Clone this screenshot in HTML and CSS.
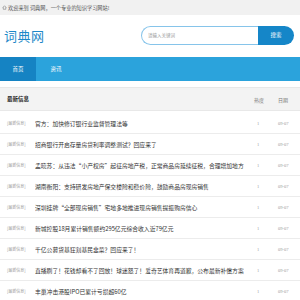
FILE: index.html
```html
<!DOCTYPE html>
<html lang="zh-CN">
<head>
  <meta charset="UTF-8">
  <meta name="viewport" content="width=device-width, initial-scale=1.0">
  <title>词典网</title>
  <link rel="stylesheet" href="styles.css">
</head>
<body>

<div class="top-bar">
  <svg class="home-icon" viewBox="0 0 10 10" aria-hidden="true">
    <path d="M1.5 5 L5 1.5 L8.5 5 M2.5 4.2 V8.5 H7.5 V4.2" fill="none" stroke="#666" stroke-width="1"/>
  </svg>
  <span>欢迎来到 词典网，一个专业的知识学习网站!</span>
</div>

<header class="site-header">
  <div class="logo">词典网</div>
  <form class="search-form">
    <input class="search-input" type="text" placeholder="请输入关键词">
    <button class="search-btn" type="button">搜索</button>
  </form>
</header>

<nav class="main-nav">
  <a class="nav-link active" href="#">首页</a>
  <a class="nav-link" href="#">资讯</a>
</nav>

<section class="news-box">
  <div class="news-head">
    <span class="head-title">最新信息</span>
    <span class="head-col">热度</span>
    <span class="head-col">日期</span>
  </div>
  <ul class="news-list">
    <li class="news-row"><span class="tag">[最新信息]</span><a class="title" href="#">官方：加快修订银行业监督管理法等</a><span class="heat">1</span><span class="date">09-07</span></li>
    <li class="news-row"><span class="tag">[最新信息]</span><a class="title" href="#">招商银行开启存量房贷利率调整测试？回应来了</a><span class="heat">1</span><span class="date">09-07</span></li>
    <li class="news-row"><span class="tag">[最新信息]</span><a class="title" href="#">孟晓苏：从违法“小产权房”起征房地产税，正常商品房延续征税，合理增加地方</a><span class="heat">1</span><span class="date">09-07</span></li>
    <li class="news-row"><span class="tag">[最新信息]</span><a class="title" href="#">湖南衡阳：支持研发房地产保交楼险和稳价险，鼓励商品房现房销售</a><span class="heat">1</span><span class="date">09-07</span></li>
    <li class="news-row"><span class="tag">[最新信息]</span><a class="title" href="#">深圳挂牌“全部现房销售”宅地多地推进现房销售提振购房信心</a><span class="heat">1</span><span class="date">09-07</span></li>
    <li class="news-row"><span class="tag">[最新信息]</span><a class="title" href="#">新城控股18月累计销售额约295亿元综合收入近79亿元</a><span class="heat">1</span><span class="date">09-07</span></li>
    <li class="news-row"><span class="tag">[最新信息]</span><a class="title" href="#">千亿公募货基狂割基民韭菜？回应来了！</a><span class="heat">1</span><span class="date">09-07</span></li>
    <li class="news-row"><span class="tag">[最新信息]</span><a class="title" href="#">直播刷了！花钱却看不了回放！球迷怒了！爱奇艺体育再道歉，公布最新补偿方案</a><span class="heat">1</span><span class="date">09-07</span></li>
    <li class="news-row"><span class="tag">[最新信息]</span><a class="title" href="#">丰巢冲击港股IPO已累计亏损超60亿</a><span class="heat">1</span><span class="date">09-07</span></li>
  </ul>
</section>

</body>
</html>
```

FILE: styles.css
```css
body {
  margin: 0;
  background-color: #fff;
  font-family: "Noto Sans CJK SC", "Noto Sans", sans-serif;
  color: #333;
}

.top-bar {
  height: 15px;
  background-color: #f1f1f1;
  display: flex;
  align-items: center;
  padding-left: 2px;
  font-size: 5.2px;
  color: #555;
}

.home-icon {
  width: 5px;
  height: 5px;
  margin-right: 1px;
}

.site-header {
  height: 42px;
  display: flex;
  align-items: center;
  justify-content: space-between;
  padding: 0 6px 0 4px;
}

.logo {
  font-size: 13px;
  color: #1e88c8;
  letter-spacing: 0.5px;
  margin-top: -2px;
}

.search-form {
  display: flex;
  height: 19px;
  margin-top: -2px;
}

.search-input {
  width: 117px;
  box-sizing: border-box;
  border: 1px solid #86c4ea;
  border-right: none;
  border-radius: 10px 0 0 10px;
  padding: 0 0 0 6px;
  font-size: 4.5px;
  font-family: inherit;
  outline: none;
}

.search-input::placeholder {
  color: #999;
}

.search-btn {
  width: 36px;
  border: none;
  border-radius: 0 10px 10px 0;
  background-color: #1586c8;
  color: #fff;
  font-size: 5.5px;
  font-family: inherit;
  padding: 0;
}

.main-nav {
  height: 24px;
  background-color: #2ba3dc;
  display: flex;
}

.nav-link {
  width: 36px;
  display: flex;
  align-items: center;
  justify-content: center;
  color: #fff;
  font-size: 5.5px;
  text-decoration: none;
}

.nav-link.active {
  background-color: #1583c3;
}

.nav-link + .nav-link {
  margin-left: 2px;
}

.news-box {
  margin-top: 6px;
}

.news-head {
  height: 22px;
  display: grid;
  grid-template-columns: 1fr 24px 22px;
  align-items: center;
  background-color: #f3f3f3;
  border-top: 1px solid #e8e8e8;
  border-bottom: 1px solid #e8e8e8;
  padding-left: 7px;
}

.head-title {
  font-size: 5.5px;
  font-weight: 700;
  color: #222;
}

.head-col {
  font-size: 5px;
  color: #777;
}

.news-list {
  list-style: none;
  margin: 2px 0 0;
  padding: 0;
}

.news-row {
  height: 20px;
  display: grid;
  grid-template-columns: 28px 1fr 24px 22px;
  align-items: center;
  border-bottom: 1px solid #ececec;
  padding-left: 7px;
}

.tag {
  font-size: 4px;
  color: #999;
}

.title {
  font-size: 5.8px;
  color: #333;
  text-decoration: none;
  white-space: nowrap;
  overflow: hidden;
}

.heat,
.date {
  font-family: "Liberation Serif", serif;
  font-size: 4.5px;
  color: #999;
}

.heat {
  padding-left: 3px;
}
```
